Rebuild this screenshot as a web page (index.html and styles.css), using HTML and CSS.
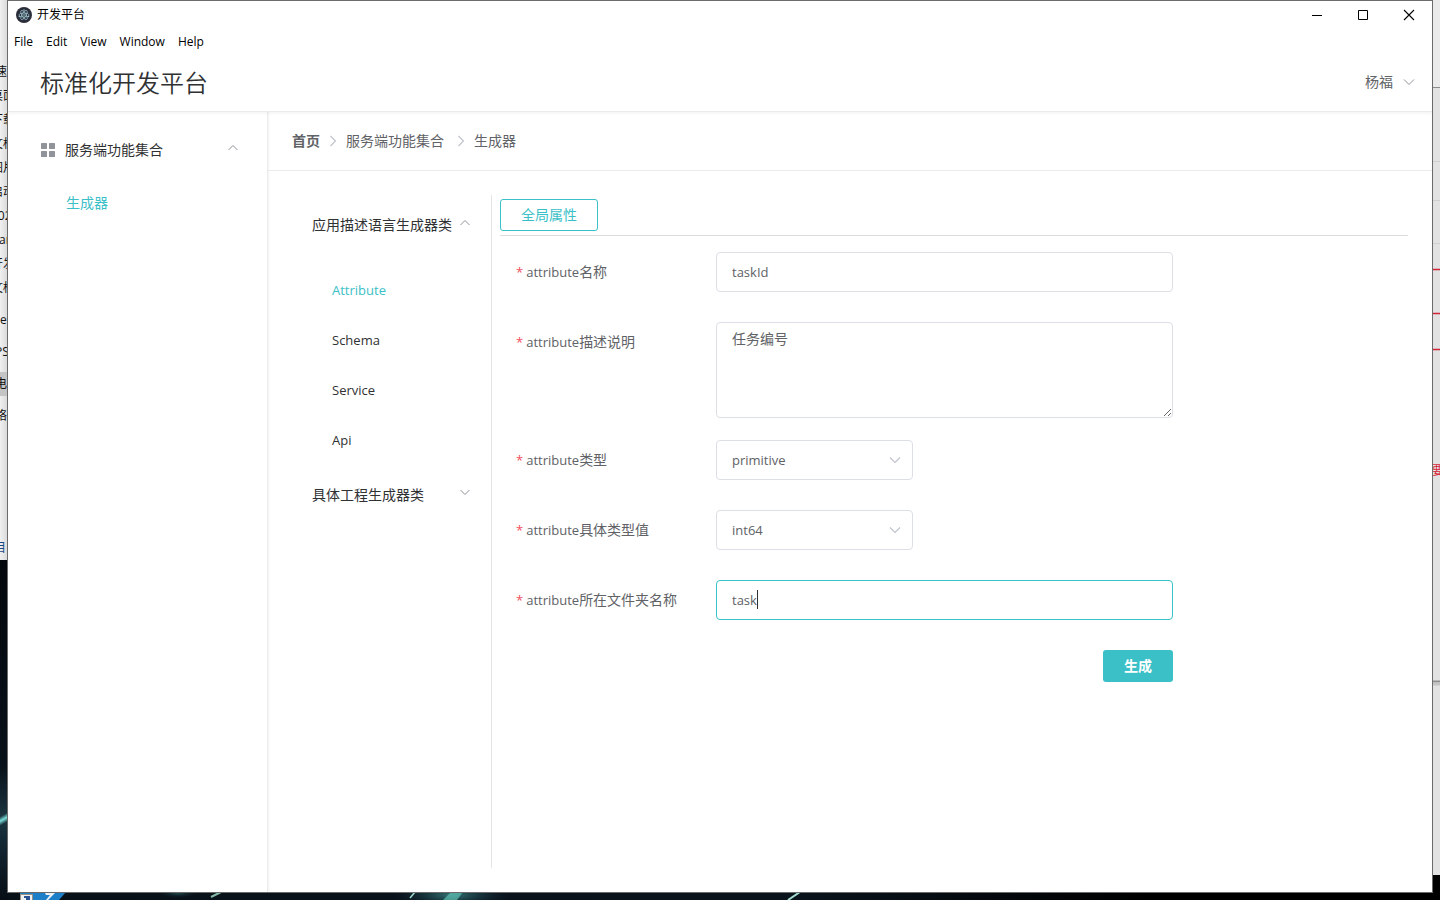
FILE: index.html
```html
<!DOCTYPE html>
<html lang="zh-CN">
<head>
<meta charset="utf-8">
<title>开发平台</title>
<link rel="stylesheet" href="styles.css">
</head>
<body>
<div class="desktop">
  <div class="explorer" aria-hidden="true">
    <ul class="explorer-list">
      <li class="quick">速</li><li>桌面</li><li>下载</li><li>文档</li><li>图片</li><li>启动</li><li>202</li><li class="near">ar</li><li>开发</li><li>文档</li>
    </ul>
    <ul class="explorer-places">
      <li>e</li><li class="wide">PS</li><li class="wide"><span class="picked">电</span></li><li class="wide">络</li>
    </ul>
    <span class="explorer-status">目</span>
  </div>
  <div class="wall-left" aria-hidden="true"></div>
  <svg class="behind-right" width="8" height="875" viewBox="0 0 8 875" aria-hidden="true">
    <rect width="8" height="875" fill="#e2e2e2"/>
    <rect width="8" height="87" fill="#eaeaea"/>
    <path d="M0 87.500H8" stroke="#8c8c8c"/>
    <path d="M0 161.500H8M0 200.500H8M0 243.500H8" stroke="#cfcfcf"/>
    <path d="M0 269.500H8M0 313.500H8M0 349.500H8" stroke="#cf2438" stroke-width="1.500"/>
    <path d="M0 681.500H8" stroke="#8e8e8e" stroke-width="2"/>
    <path d="M0 684H8" stroke="#c4c4c4" stroke-width="3"/>
  </svg>
  <span class="behind-note" aria-hidden="true">要</span>
  <svg class="wall-bottom" width="900" height="8" viewBox="0 0 900 8" aria-hidden="true">
    <defs>
      <radialGradient id="glow"><stop offset="0" stop-color="#3f8f8c" stop-opacity=".8"/><stop offset="1" stop-color="#12283a" stop-opacity="0"/></radialGradient>
    </defs>
    <ellipse cx="452" cy="3" rx="60" ry="14" fill="url(#glow)"/>
    <ellipse cx="178" cy="1" rx="20" ry="5" fill="url(#glow)" opacity=".6"/>
    <path d="M443 8L451 0H463L457 8Z" fill="#5cc0b4" opacity=".7"/>
    <path d="M211 5L221 0" stroke="#86b8a9" stroke-width="2"/>
    <path d="M410 6L415 0" stroke="#9fd8cc" stroke-width="1.500"/>
    <path d="M788 8L800 0" stroke="#a6dcd0" stroke-width="2"/>
    <path d="M20 0H66L59 8H20Z" fill="#1d7fc8"/>
    <path d="M45 1H55L48 8H46L50 3H46Z" fill="#e9eff5"/>
    <rect x="20.500" y="2.500" width="12" height="8" fill="#eef0f2" stroke="#9b8f84"/>
    <path d="M24 4H30V8H26V6H24Z" fill="#2c5190"/>
  </svg>

  <div class="window">
    <header class="titlebar">
      <svg class="app-icon" width="16" height="16" viewBox="0 0 16 16" aria-hidden="true">
        <circle cx="8" cy="8" r="8" fill="#2b2e3a"/>
        <g fill="none" stroke="#9fc7d2" stroke-width=".7">
          <ellipse cx="8" cy="8" rx="5.200" ry="2"/>
          <ellipse cx="8" cy="8" rx="5.200" ry="2" transform="rotate(60 8 8)"/>
          <ellipse cx="8" cy="8" rx="5.200" ry="2" transform="rotate(120 8 8)"/>
        </g>
        <g fill="#9fc7d2"><circle cx="8" cy="8" r=".8"/><circle cx="3.300" cy="9.500" r=".7"/><circle cx="12.600" cy="9.500" r=".7"/><circle cx="8" cy="3" r=".7"/></g>
      </svg>
      <span class="app-name">开发平台</span>
      <div class="window-buttons">
        <button type="button" aria-label="最小化"><svg width="12" height="12" viewBox="0 0 12 12"><path d="M1 6.500H11" stroke="#000"/></svg></button>
        <button type="button" aria-label="最大化"><svg width="12" height="12" viewBox="0 0 12 12"><path d="M1.500 1.500H10.500V10.500H1.500Z" fill="none" stroke="#000"/></svg></button>
        <button type="button" aria-label="关闭"><svg width="12" height="12" viewBox="0 0 12 12"><path d="M1 1L11 11M11 1L1 11" stroke="#000" stroke-width="1.100"/></svg></button>
      </div>
    </header>
    <nav class="menubar">
      <button type="button">File</button><button type="button">Edit</button><button type="button">View</button><button type="button">Window</button><button type="button">Help</button>
    </nav>
    <div class="app-header">
      <h1 class="brand">标准化开发平台</h1>
      <button type="button" class="user">杨福 <svg class="chevron" width="12" height="12" viewBox="0 0 12 12"><path d="M1 3.500L6 8.500L11 3.500"/></svg></button>
    </div>
    <div class="layout">
      <aside class="sidebar">
        <button type="button" class="side-group">
          <svg width="14" height="14" viewBox="0 0 14 14" fill="#909399" aria-hidden="true"><rect width="6" height="6" rx=".6"/><rect x="8" width="6" height="6" rx=".6"/><rect y="8" width="6" height="6" rx=".6"/><rect x="8" y="8" width="6" height="6" rx=".6"/></svg>
          <span>服务端功能集合</span>
          <svg class="chevron raised" width="12" height="12" viewBox="0 0 12 12"><path d="M1.500 8L6 3.500L10.500 8"/></svg>
        </button>
        <a href="#" class="side-link">生成器</a>
      </aside>
      <main class="main">
        <nav class="breadcrumb">
          <a href="#" class="crumb-home">首页</a>
          <svg class="crumb-sep" width="8" height="12" viewBox="0 0 8 12"><path d="M1.500 1L6.500 6L1.500 11"/></svg>
          <a href="#" class="crumb-mid">服务端功能集合</a>
          <svg class="crumb-sep" width="8" height="12" viewBox="0 0 8 12"><path d="M1.500 1L6.500 6L1.500 11"/></svg>
          <span>生成器</span>
        </nav>
        <div class="content">
          <nav class="tree">
            <button type="button" class="tree-group">应用描述语言生成器类 <svg class="chevron raised" width="12" height="12" viewBox="0 0 12 12"><path d="M1.500 8L6 3.500L10.500 8"/></svg></button>
            <ul class="tree-items">
              <li><a href="#" class="active">Attribute</a></li>
              <li><a href="#">Schema</a></li>
              <li><a href="#">Service</a></li>
              <li><a href="#">Api</a></li>
            </ul>
            <button type="button" class="tree-group">具体工程生成器类 <svg class="chevron raised" width="12" height="12" viewBox="0 0 12 12"><path d="M1.500 3L6 7.500L10.500 3"/></svg></button>
          </nav>
          <section class="pane">
            <div class="toolbar"><button type="button" class="btn-outline">全局属性</button></div>
            <form class="form">
              <label for="name"><i>*</i><span class="latin">attribute</span>名称</label>
              <input id="name" class="field" type="text" value="taskId">
              <label for="desc"><i>*</i><span class="latin">attribute</span>描述说明</label>
              <textarea id="desc" class="field area">任务编号</textarea>
              <label for="type" class="after-area"><i>*</i><span class="latin">attribute</span>类型</label>
              <div class="select after-area">
                <select id="type" class="field"><option>primitive</option></select>
                <svg class="chevron" width="12" height="12" viewBox="0 0 12 12"><path d="M1 3.500L6 8.500L11 3.500"/></svg>
              </div>
              <label for="value"><i>*</i><span class="latin">attribute</span>具体类型值</label>
              <div class="select">
                <select id="value" class="field"><option>int64</option></select>
                <svg class="chevron" width="12" height="12" viewBox="0 0 12 12"><path d="M1 3.500L6 8.500L11 3.500"/></svg>
              </div>
              <label for="folder"><i>*</i><span class="latin">attribute</span>所在文件夹名称</label>
              <div class="focused">
                <input id="folder" class="field" type="text" value="task">
                <span class="caret"></span>
              </div>
              <button type="button" class="btn-primary">生成</button>
            </form>
          </section>
        </div>
      </main>
    </div>
  </div>
</div>
</body>
</html>
```
FILE: styles.css
```css
:root {
  --teal: #3bc0c8;
  --text: #303133;
  --muted: #606266;
  --line: #dcdfe6;
}
* { box-sizing: border-box; }
body {
  margin: 0;
  font: 14px/20px "Open Sans", "Noto Sans CJK SC", sans-serif;
  color: var(--text);
}
button {
  padding: 0;
  border: 0;
  background: none;
  font: inherit;
  color: inherit;
}
a { color: inherit; text-decoration: none; }
ul { list-style: none; margin: 0; padding: 0; }

/* Desktop behind the window */
.desktop {
  position: relative;
  display: flex;
  min-height: 100vh;
  padding: 0 7px 7px;
  overflow: hidden;
  background: linear-gradient(90deg, #081018, #0a131c 55%, #000 80%);
}
.explorer {
  position: absolute;
  top: 0;
  left: 0;
  width: 8px;
  height: 560px;
  padding-top: 60px;
  overflow: hidden;
  background: linear-gradient(90deg, #f0f0f0, #d8d8d8);
  font-size: 12px;
  color: #111;
  white-space: nowrap;
}
.explorer-list { margin-left: -9px; line-height: 24px; }
.explorer-list .quick { padding-left: 4px; }
.explorer-list .near { padding-left: 8px; }
.explorer-places { padding-top: 4px; line-height: 32px; }
.explorer-places li { height: 32px; }
.explorer-places .wide { margin-left: -5px; }
.picked { display: inline-block; width: 16px; line-height: 24px; background: #c4c4c4; }
.explorer-status { position: absolute; left: -6px; bottom: 2px; color: #1b4a86; }
.wall-left {
  position: absolute;
  top: 560px;
  bottom: 0;
  left: 0;
  width: 8px;
  background:
    linear-gradient(150deg, transparent 35%, #78dcd8 50%, transparent 65%) 0 246px / 8px 26px no-repeat,
    linear-gradient(#04080d, #081019 60%, #1b3540 76%, #142936 82%, #070d14);
}
.behind-right { position: absolute; top: 0; right: 0; }
.behind-note {
  position: absolute;
  top: 461px;
  right: -4px;
  font-size: 12px;
  color: #d8283c;
}
.wall-bottom { position: absolute; left: 0; bottom: 0; }

/* Window */
.window {
  position: relative;
  display: flex;
  flex: 1;
  flex-direction: column;
  min-width: 0;
  border: 1px solid #6b6b6b;
  background: #fff;
}
.titlebar {
  display: flex;
  align-items: center;
  height: 28px;
  padding-left: 8px;
  font-size: 12px;
  color: #000;
}
.app-name { margin-left: 5px; }
.window-buttons { display: flex; margin-left: auto; }
.window-buttons button {
  display: grid;
  place-items: center;
  width: 46px;
  height: 28px;
}
.menubar {
  display: flex;
  gap: 13px;
  height: 25px;
  padding-left: 6px;
  font-size: 12px;
  color: #000;
}
.app-header {
  z-index: 1;
  display: flex;
  align-items: center;
  justify-content: space-between;
  height: 58px;
  padding: 0 17px 0 32px;
  border-bottom: 1px solid #ebebeb;
  box-shadow: 0 2px 2px rgba(0, 21, 41, .04);
}
.brand { margin: 0; font-size: 24px; font-weight: 350; line-height: 32px; }
.user { display: flex; align-items: center; gap: 10px; padding-bottom: 2px; color: var(--muted); }
.chevron { fill: none; stroke: #909399; stroke-width: 1; }
.raised { margin: -4px 0 0 auto; }
.layout { display: flex; flex: 1; }

.sidebar {
  width: 260px;
  padding-top: 10px;
  border-right: 1px solid #ebebeb;
  box-shadow: 1px 0 2px rgba(0, 21, 41, .05);
}
.side-group {
  display: flex;
  align-items: center;
  width: 100%;
  height: 56px;
  padding: 0 28px 0 33px;
}
.side-group span { margin-left: 10px; }
.side-link {
  display: block;
  padding-left: 58px;
  line-height: 50px;
  color: var(--teal);
}

.main { display: flex; flex: 1; flex-direction: column; min-width: 0; }
.breadcrumb {
  display: flex;
  align-items: center;
  gap: 9px;
  height: 59px;
  padding-left: 24px;
  border-bottom: 1px solid #ebebeb;
  color: var(--muted);
}
.crumb-home { font-weight: 700; }
.crumb-mid { padding-right: 4px; }
.crumb-sep { fill: none; stroke: #c0c4cc; stroke-width: 1.2; }
.content { display: flex; flex: 1; padding: 24px; }

.tree { width: 200px; border-right: 1px solid #e4e4e4; }
.tree-group {
  display: flex;
  align-items: center;
  width: 100%;
  height: 60px;
  padding: 0 20px;
}
.tree-items { padding-top: 10px; font-size: 13px; }
.tree-items a { display: block; padding-left: 40px; line-height: 50px; }
.tree-items .active { color: var(--teal); }

/* Form pane */
.pane { flex: 1; min-width: 0; padding-left: 8px; }
.toolbar { padding: 4px 0; border-bottom: 1px solid #dcdcdc; }
.btn-outline {
  display: block;
  height: 32px;
  padding: 0 20px;
  border: 1px solid var(--teal);
  border-radius: 3px;
  color: var(--teal);
}
.form {
  display: grid;
  grid-template-columns: 200px minmax(0, 457px);
  row-gap: 30px;
  align-items: start;
  padding: 16px 0 0 16px;
  color: var(--muted);
}
.form label { line-height: 40px; }
.form i { margin-right: 3px; font-size: 13px; font-style: normal; color: #f24e5c; }
.latin { font-size: 13px; }
.field {
  display: block;
  width: 100%;
  height: 40px;
  margin: 0;
  padding: 0 15px;
  border: 1px solid var(--line);
  border-radius: 4px;
  outline: 0;
  background: #fff;
  font: 13px/20px "Open Sans", "Noto Sans CJK SC", sans-serif;
  color: var(--muted);
}
.area { height: 96px; padding: 6px 15px; font-size: 14px; resize: vertical; }
.after-area { margin-top: -8px; }
.select { position: relative; width: 197px; }
.select .field { appearance: none; }
.select .chevron { position: absolute; top: 14px; right: 12px; stroke: #c0c4cc; stroke-width: 1.2; pointer-events: none; }
.focused { position: relative; }
.focused .field { border-color: var(--teal); }
.caret { position: absolute; top: 10px; left: 41px; width: 1px; height: 19px; background: #303133; }
.btn-primary {
  grid-column: 2;
  justify-self: end;
  width: 70px;
  height: 32px;
  border-radius: 3px;
  background: var(--teal);
  font-weight: 700;
  color: #fff;
}
```
